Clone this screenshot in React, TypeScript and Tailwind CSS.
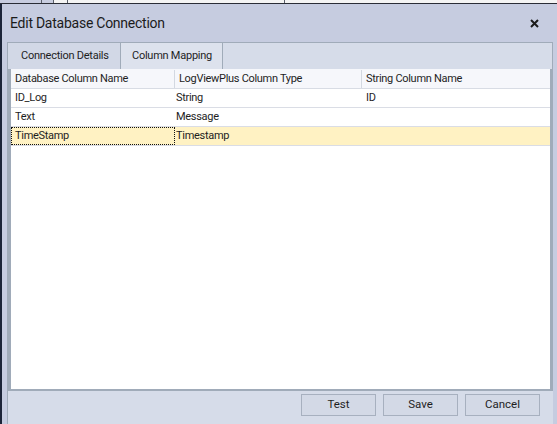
const font = { fontFamily: 'Roboto, "Noto Sans", sans-serif' };

const rows = [
  { name: "ID_Log", type: "String", str: "ID", selected: false },
  { name: "Text", type: "Message", str: "", selected: false },
  { name: "TimeStamp", type: "Timestamp", str: "", selected: true },
];

export default function App() {
  return (
    <div
      className="w-[557px] h-[424px] overflow-hidden flex flex-col bg-[#c6cce0] text-[#1e1e1e]"
      style={font}
    >
      {/* window behind the dialog */}
      <div className="h-[3px] flex shrink-0">
        <div className="w-[41px] bg-[#c8cde0]" />
        <div className="w-[1px] bg-[#5a5f6b]" />
        <div className="w-[11px] bg-[#c8cde0]" />
        <div className="w-[1px] bg-[#5a5f6b]" />
        <div className="w-[13px] bg-[#f4f4f4]" />
        <div className="w-[1px] bg-[#5a5f6b]" />
        <div className="w-[216px] bg-[#f4f4f4]" />
        <div className="w-[1px] bg-[#5a5f6b]" />
        <div className="flex-1 bg-[#f4f4f4]" />
      </div>
      <div className="h-[1px] bg-[#2a2d36] shrink-0" />

      <div className="flex flex-1 min-h-0">
        <div className="w-[2px] bg-[#1c2438] shrink-0" />

        <div className="flex-1 flex flex-col min-w-0">
          {/* title bar */}
          <div className="h-[38px] flex items-center justify-between pl-[8px] pr-[18px] shrink-0">
            <span className="text-[14px] tracking-[-0.25px] text-[#1b1b1b]">Edit Database Connection</span>
            <svg width="9" height="9" viewBox="0 0 9 9" className="mt-[1px]">
              <path d="M1 1 L8 8 M8 1 L1 8" stroke="#1b1b1b" strokeWidth="2" />
            </svg>
          </div>

          {/* client area */}
          <div className="flex-1 flex flex-col ml-[5px] mr-[4px] border-l border-[#a0abb9] bg-[#d6dce9] min-h-0">
            {/* tab strip */}
            <div className="h-[27px] flex border-t border-r border-[#a0abb9] bg-[#d6dce9] shrink-0 text-[11px] tracking-[-0.25px] whitespace-nowrap">
              <div className="w-[112px] flex items-center pl-[13px] bg-[#d2d8e6]">
                Connection Details
              </div>
              <div className="w-[103px] flex items-center pl-[11px] bg-[#dde2ed] border-x border-[#a0abb9]">
                Column Mapping
              </div>
            </div>

            {/* tab page */}
            <div className="h-[322px] flex flex-col border-l-[3px] border-r-[3px] border-b-[2px] border-[#a0abb9] bg-white shrink-0 text-[11px] tracking-[-0.3px] whitespace-nowrap">
              <div className="h-[20px] pt-[1px] flex bg-[#f6f7fb] border-b border-[#d8dce4]">
                <div className="w-[164px] pl-[4px] flex items-center border-r border-[#d3d8e1]">
                  Database Column Name
                </div>
                <div className="w-[187px] pl-[4px] flex items-center border-r border-[#d3d8e1]">
                  LogViewPlus Column Type
                </div>
                <div className="flex-1 pl-[4px] flex items-center">String Column Name</div>
              </div>
              {rows.map((r) => (
                <div
                  key={r.name}
                  className={
                    r.selected
                      ? "h-[19px] flex bg-[#fff2c3] border-b border-[#dadde5]"
                      : "h-[19px] pt-[1px] flex border-b border-[#dadde5]"
                  }
                >
                  <div
                    className={
                      r.selected
                        ? "w-[164px] pl-[3px] pt-[1px] flex items-center border border-dotted border-[#111]"
                        : "w-[164px] pl-[4px] flex items-center"
                    }
                  >
                    {r.name}
                  </div>
                  <div className={r.selected ? "w-[187px] pl-[1px] pt-[1px] flex items-center" : "w-[187px] pl-[1px] flex items-center"}>
                    {r.type}
                  </div>
                  <div className="flex-1 pl-[4px] flex items-center">{r.str}</div>
                </div>
              ))}
            </div>

            {/* buttons */}
            <div className="flex-1 flex justify-end items-start gap-[7px] pt-[3px] pr-[13px]">
              {["Test", "Save", "Cancel"].map((b) => (
                <button
                  key={b}
                  className="w-[75px] h-[22px] border border-[#a7b0bf] bg-[#d3d9e6] text-[11.5px] flex items-center justify-center"
                >
                  {b}
                </button>
              ))}
            </div>
          </div>
        </div>
      </div>
    </div>
  );
}
